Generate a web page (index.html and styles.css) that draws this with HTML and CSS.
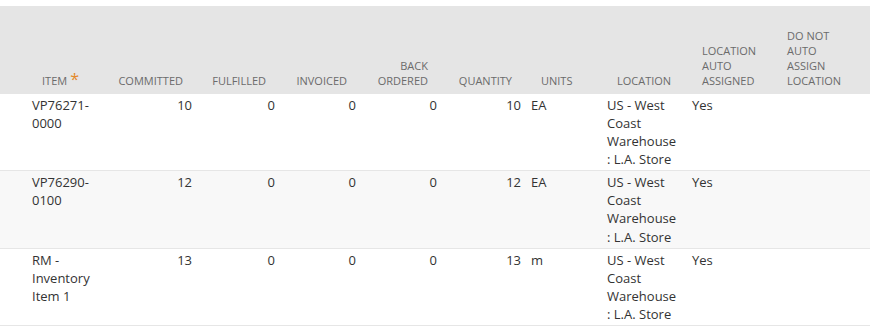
FILE: index.html
```html
<!DOCTYPE html>
<html>
<head>
<meta charset="utf-8">
<link rel="stylesheet" href="styles.css">
</head>
<body>
<table class="grid">
  <colgroup>
    <col class="c-pad">
    <col class="c-85">
    <col class="c-85">
    <col class="c-83">
    <col class="c-81">
    <col class="c-81">
    <col class="c-84">
    <col class="c-76">
    <col class="c-85">
    <col class="c-85">
    <col class="c-85">
    <col>
  </colgroup>
  <thead>
    <tr>
      <th></th>
      <th class="left">Item<span class="req">*</span></th>
      <th class="right">Committed</th>
      <th class="right">Fulfilled</th>
      <th class="right">Invoiced</th>
      <th class="right">Back Ordered</th>
      <th class="right">Quantity</th>
      <th class="left">Units</th>
      <th class="left">Location</th>
      <th class="left">Location Auto Assigned</th>
      <th class="left">Do Not Auto Assign Location</th>
      <th></th>
    </tr>
  </thead>
  <tbody>
    <tr>
      <td></td>
      <td>VP76271-0000</td>
      <td class="num">10</td>
      <td class="num">0</td>
      <td class="num">0</td>
      <td class="num">0</td>
      <td class="num">10</td>
      <td>EA</td>
      <td>US - West Coast Warehouse : L.A. Store</td>
      <td>Yes</td>
      <td></td>
      <td></td>
    </tr>
    <tr class="alt">
      <td></td>
      <td>VP76290-0100</td>
      <td class="num">12</td>
      <td class="num">0</td>
      <td class="num">0</td>
      <td class="num">0</td>
      <td class="num">12</td>
      <td>EA</td>
      <td>US - West Coast Warehouse : L.A. Store</td>
      <td>Yes</td>
      <td></td>
      <td></td>
    </tr>
    <tr>
      <td></td>
      <td>RM - Inventory Item 1</td>
      <td class="num">13</td>
      <td class="num">0</td>
      <td class="num">0</td>
      <td class="num">0</td>
      <td class="num">13</td>
      <td>m</td>
      <td>US - West Coast Warehouse : L.A. Store</td>
      <td>Yes</td>
      <td></td>
      <td></td>
    </tr>
  </tbody>
</table>
</body>
</html>
```

FILE: styles.css
```css
html, body {
  margin: 0;
  padding: 0;
  background: #ffffff;
}

body {
  padding-top: 6px;
  font-family: "Open Sans", "Liberation Sans", sans-serif;
  color: #333333;
}

.grid {
  width: 870px;
  table-layout: fixed;
  border-collapse: collapse;
  border-spacing: 0;
}

.c-pad { width: 27px; }
.c-85 { width: 85px; }
.c-83 { width: 83px; }
.c-81 { width: 81px; }
.c-84 { width: 84px; }
.c-76 { width: 76px; }

.grid thead tr {
  background: #e5e5e5;
}

.grid th {
  height: 88px;
  box-sizing: border-box;
  vertical-align: bottom;
  padding: 0 5px 6px 5px;
  font-size: 11px;
  line-height: 15px;
  font-weight: normal;
  text-transform: uppercase;
  color: #6b6b6b;
}

.grid th.left {
  text-align: left;
  padding-left: 15px;
}

.grid th.right {
  text-align: right;
  padding-right: 14px;
}

.req {
  color: #e3892a;
  font-size: 16px;
  line-height: 0;
  position: relative;
  top: 0;
  margin-left: 3px;
}

.grid td {
  vertical-align: top;
  padding: 2px 5px 2px 5px;
  font-size: 13px;
  line-height: 18.08px;
  border-bottom: 1px solid #e6e6e6;
  text-align: left;
}

.grid td.num {
  text-align: right;
}

.grid tr.alt td {
  background: #f8f8f8;
}
```
